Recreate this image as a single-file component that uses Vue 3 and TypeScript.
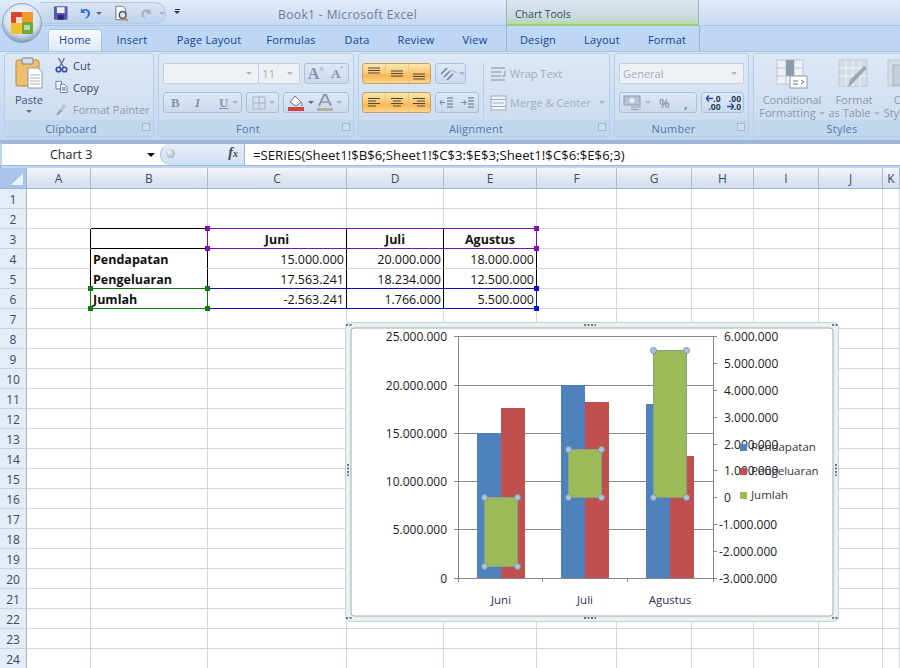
<script setup lang="ts">
const tabs = ['Home', 'Insert', 'Page Layout', 'Formulas', 'Data', 'Review', 'View', 'Design', 'Layout', 'Format']
const columns = ['A', 'B', 'C', 'D', 'E', 'F', 'G', 'H', 'I', 'J', 'K']
const rows = Array.from({ length: 24 }, (_, i) => i + 1)

const cells: Record<string, string> = {
  C3: 'Juni', D3: 'Juli', E3: 'Agustus',
  B4: 'Pendapatan', C4: '15.000.000', D4: '20.000.000', E4: '18.000.000',
  B5: 'Pengeluaran', C5: '17.563.241', D5: '18.234.000', E5: '12.500.000',
  B6: 'Jumlah', C6: '-2.563.241', D6: '1.766.000', E6: '5.500.000',
}

function cellClass(col: string, row: number) {
  const inTable = 'BCDE'.includes(col)
  return {
    bold: row === 3 || col === 'B',
    center: row === 3,
    right: row > 3 && col !== 'B',
    'edge-right': row >= 3 && row <= 6 && 'ABCDE'.includes(col),
    'edge-bottom': inTable && (row === 2 || row === 3 || row === 6),
    'no-bottom': inTable && (row === 4 || row === 5) && col === 'B',
  }
}

// selected ranges drawn over the sheet
const ranges = [
  { color: '#7f0fb0', x: 207, y: 228, w: 329, h: 20 },
  { color: '#0a10c0', x: 207, y: 288, w: 329, h: 20 },
  { color: '#107a10', x: 90, y: 288, w: 117, h: 20 },
]
function corners(r: { x: number; y: number; w: number; h: number }) {
  return [[r.x, r.y], [r.x + r.w, r.y], [r.x, r.y + r.h], [r.x + r.w, r.y + r.h]]
}

const leftAxis = [
  { label: '25.000.000', y: 336 },
  { label: '20.000.000', y: 385 },
  { label: '15.000.000', y: 433 },
  { label: '10.000.000', y: 481 },
  { label: '5.000.000', y: 529 },
  { label: '0', y: 578 },
]
const rightAxis = [
  { label: '6.000.000', y: 336 },
  { label: '5.000.000', y: 363 },
  { label: '4.000.000', y: 390 },
  { label: '3.000.000', y: 417 },
  { label: '2.000.000', y: 444 },
  { label: '1.000.000', y: 470 },
  { label: '0', y: 497 },
  { label: '-1.000.000', y: 524 },
  { label: '-2.000.000', y: 551 },
  { label: '-3.000.000', y: 578 },
]
const groups = [
  { name: 'Juni', x: 477, blueTop: 433, redTop: 408, greenTop: 497, greenBottom: 566 },
  { name: 'Juli', x: 561, blueTop: 385, redTop: 402, greenTop: 449, greenBottom: 497 },
  { name: 'Agustus', x: 646, blueTop: 404, redTop: 456, greenTop: 350, greenBottom: 497 },
]
const legend = [
  { name: 'Pendapatan', color: '#4f81bd', y: 447 },
  { name: 'Pengeluaran', color: '#c0504d', y: 471 },
  { name: 'Jumlah', color: '#9bbb59', y: 495 },
]
</script>

<template>
  <div class="window">
    <div class="title-bar">
      <div class="office-btn">
        <svg width="42" height="42" viewBox="0 0 42 42">
          <defs>
            <radialGradient id="orb" cx="50%" cy="35%" r="65%">
              <stop offset="0" stop-color="#fdfeff" />
              <stop offset="0.7" stop-color="#d3dfee" />
              <stop offset="1" stop-color="#7f96b4" />
            </radialGradient>
          </defs>
          <circle cx="21" cy="21" r="19.5" fill="url(#orb)" stroke="#8ba3c2" />
          <rect x="10" y="10" width="11" height="11" fill="#d8472b" rx="1" />
          <rect x="21" y="10" width="11" height="10" fill="#f09a2a" rx="1" />
          <rect x="10" y="21" width="11" height="11" fill="#f2c22e" rx="1" />
          <rect x="21" y="20" width="11" height="12" fill="#6cab3a" rx="1" />
          <rect x="15" y="15" width="6" height="6" fill="#fff" opacity=".8" />
          <rect x="23" y="23" width="6" height="5" fill="#fff" opacity=".55" />
        </svg>
      </div>
      <div class="qat">
        <svg width="16" height="16" viewBox="0 0 16 16">
          <rect x="1" y="1" width="14" height="14" rx="1" fill="#5b58a8" />
          <rect x="4" y="2" width="8" height="6" fill="#e8f0fa" />
          <rect x="5" y="10" width="6" height="5" fill="#2c2a70" />
        </svg>
        <svg class="undo" width="15" height="15" viewBox="0 0 15 15">
          <path d="M4 2 L4 7 L9 7 L7 5 C10 4 12 6 11 9 C10.500 11 9 12 7 13 C11 13 14 10 13.500 7 C13 3 9 2 5.500 3.500 Z" fill="#2f6fc8" />
        </svg>
        <span class="tiny-arrow dark"></span>
        <svg class="preview" width="16" height="17" viewBox="0 0 16 17">
          <path d="M2 1 H9 L12 4 V15 H2 Z" fill="#fdfdf8" stroke="#6b7686" />
          <circle cx="9" cy="10" r="3.500" fill="#cfe2f5" stroke="#3f4a5a" stroke-width="1.300" />
          <path d="M11 13 L14 16" stroke="#d18a2a" stroke-width="2" />
        </svg>
        <svg class="redo" width="15" height="15" viewBox="0 0 15 15">
          <path d="M11 3 V8 H6 L8 6 C5 5 3 7 4 10 C4.500 11.500 6 12.500 7 13 C3 13 1 10 1.500 7 C2 3 6 2 9.500 4 Z" fill="#a6b4c6" />
        </svg>
        <span class="tiny-arrow"></span>
      </div>
      <span class="qat-menu"><i></i><b></b></span>
      <span class="doc-title">Book1 - Microsoft Excel</span>
      <div class="chart-tools">Chart Tools</div>
    </div>

    <div class="tab-row">
      <span v-for="tab in tabs" :key="tab" class="tab" :class="{ active: tab === 'Home' }">{{ tab }}</span>
    </div>

    <div class="ribbon">
      <section class="group clipboard">
        <div class="group-body clip-body">
          <div class="paste">
            <svg width="28" height="32" viewBox="0 0 28 32">
              <rect x="1" y="3" width="23" height="26" rx="2" fill="#f0bf6c" stroke="#b58a48" />
              <rect x="7" y="1" width="11" height="6" rx="1" fill="#d8dde4" stroke="#7d7f80" />
              <path d="M13 11 H23 L27 15 V31 H13 Z" fill="#fff" stroke="#8d98a8" />
              <path d="M15 18 H25 M15 21 H25 M15 24 H25 M15 27 H25" stroke="#a9b5c6" />
            </svg>
            <span class="paste-label">Paste</span>
            <span class="tiny-arrow dark"></span>
          </div>
          <div class="clip-list">
            <div class="clip-item">
              <svg width="12" height="16" viewBox="0 0 12 16">
                <path d="M3 1 L8 10 M9 1 L4 10" stroke="#6b7686" stroke-width="1.500" />
                <circle cx="3" cy="12.500" r="2.300" fill="none" stroke="#2b4fa8" stroke-width="1.600" />
                <circle cx="9" cy="12.500" r="2.300" fill="none" stroke="#2b4fa8" stroke-width="1.600" />
              </svg>
              <span>Cut</span>
            </div>
            <div class="clip-item">
              <svg width="14" height="14" viewBox="0 0 14 14">
                <path d="M1 1 H7 V9 H1 Z" fill="#fff" stroke="#5c7cae" />
                <path d="M6 4 H10 L13 7 V13 H6 Z" fill="#fff" stroke="#5c7cae" />
                <path d="M7.500 8 H11.500 M7.500 10 H11.500" stroke="#2b4fa8" />
              </svg>
              <span>Copy</span>
            </div>
            <div class="clip-item off">
              <svg width="14" height="15" viewBox="0 0 14 15">
                <path d="M9 1 L13 4 L8 9 L6 7 Z" fill="#c2c8d0" />
                <path d="M6 7 L8 9 L3 14 L1 13 Z" fill="#9aa3ae" />
              </svg>
              <span>Format Painter</span>
            </div>
          </div>
        </div>
        <footer class="group-label">Clipboard<i class="launcher"></i></footer>
      </section>

      <section class="group font">
        <div class="group-body">
          <div class="line">
            <div class="combo font-name"><span class="tiny-arrow"></span></div>
            <div class="combo font-size"><span>11</span><span class="tiny-arrow"></span></div>
            <div class="btns grow-btns">
              <span class="serif big">A<sup>^</sup></span>
              <span class="serif small">A<sup>ˇ</sup></span>
            </div>
          </div>
          <div class="line">
            <div class="btns biu">
              <span class="serif strong">B</span>
              <span class="serif ital">I</span>
              <span class="serif under">U</span>
              <span class="tiny-arrow"></span>
            </div>
            <div class="btns border-btn">
              <svg width="14" height="14" viewBox="0 0 14 14">
                <path d="M1 1 H13 V13 H1 Z M7 1 V13 M1 7 H13" fill="none" stroke="#a8b4c4" />
              </svg>
              <span class="tiny-arrow"></span>
            </div>
            <div class="btns color-btns">
              <svg width="18" height="18" viewBox="0 0 18 18">
                <path d="M3 8 L8 2 L14 8 L9 12 Z" fill="#fff" stroke="#6b7686" />
                <path d="M14 8 Q16 11 15 12" stroke="#6b7686" fill="none" />
                <rect x="1" y="13" width="16" height="4" fill="#d4403a" />
              </svg>
              <span class="tiny-arrow dark"></span>
              <svg width="16" height="18" viewBox="0 0 16 18">
                <path d="M2 12 L7 1 H9 L14 12" fill="none" stroke="#8e99a8" stroke-width="2" />
                <path d="M4.500 8 H11.500" stroke="#8e99a8" stroke-width="1.500" />
                <rect x="0" y="14" width="16" height="3" fill="#b4b09a" />
              </svg>
              <span class="tiny-arrow"></span>
            </div>
          </div>
        </div>
        <footer class="group-label">Font<i class="launcher"></i></footer>
      </section>

      <section class="group alignment">
        <div class="group-body align-body">
          <div class="align-left">
            <div class="line">
              <div class="orange-set">
                <span><svg width="16" height="15" viewBox="0 0 16 15"><path d="M2 2 H14 M2 4.500 H14 M2 7 H14" stroke="#4a4a40" /></svg></span>
                <span><svg width="16" height="15" viewBox="0 0 16 15"><path d="M2 5 H14 M2 7.500 H14 M2 10 H14" stroke="#4a4a40" /></svg></span>
                <span><svg width="16" height="15" viewBox="0 0 16 15"><path d="M2 8 H14 M2 10.500 H14 M2 13 H14" stroke="#4a4a40" /></svg></span>
              </div>
              <div class="btns orient">
                <svg width="20" height="14" viewBox="0 0 20 14"><path d="M2 7 L8 1 M5 10 L11 4 M8 13 L14 7" stroke="#6b83a8" stroke-width="1.500" /><path d="M12 3 L18 6" stroke="#9db1cb" /></svg>
                <span class="tiny-arrow"></span>
              </div>
            </div>
            <div class="line">
              <div class="orange-set">
                <span><svg width="16" height="13" viewBox="0 0 16 13"><path d="M2 2.500 H14 M2 5 H10 M2 7.500 H14 M2 10 H10" stroke="#4a4a40" /></svg></span>
                <span><svg width="16" height="13" viewBox="0 0 16 13"><path d="M2 2.500 H14 M4 5 H12 M2 7.500 H14 M4 10 H12" stroke="#4a4a40" /></svg></span>
                <span><svg width="16" height="13" viewBox="0 0 16 13"><path d="M2 2.500 H14 M6 5 H14 M2 7.500 H14 M6 10 H14" stroke="#4a4a40" /></svg></span>
              </div>
              <div class="btns indent">
                <svg width="15" height="14" viewBox="0 0 15 14"><path d="M8 2 H14 M8 5 H14 M8 8 H14 M8 11 H14" stroke="#5d6c80" /><path d="M1 6.500 H6 M3 4 L1 6.500 L3 9" stroke="#5b8cc8" fill="none" /></svg>
                <svg width="15" height="14" viewBox="0 0 15 14"><path d="M8 2 H14 M8 5 H14 M8 8 H14 M8 11 H14" stroke="#5d6c80" /><path d="M1 6.500 H6 M4 4 L6 6.500 L4 9" stroke="#5b8cc8" fill="none" /></svg>
              </div>
            </div>
          </div>
          <div class="align-right">
            <div class="line wide-item">
              <svg width="18" height="16" viewBox="0 0 18 16"><path d="M1 2 H15 M1 6 H11 M1 10 H11 M1 14 H15" stroke="#a0acbb" stroke-width="1.500" /><path d="M15 5 V10 H12" stroke="#8a97a8" fill="none" /></svg>
              <span>Wrap Text</span>
            </div>
            <div class="line wide-item">
              <svg width="18" height="16" viewBox="0 0 18 16"><rect x="1" y="1" width="15" height="14" fill="#eef3f9" stroke="#a0acbb" /><path d="M3 8 H14 M1 4.500 H16 M1 11.500 H16" stroke="#a0acbb" /></svg>
              <span>Merge &amp; Center</span>
              <span class="tiny-arrow merge-arrow"></span>
            </div>
          </div>
        </div>
        <footer class="group-label">Alignment<i class="launcher"></i></footer>
      </section>

      <section class="group number">
        <div class="group-body">
          <div class="line">
            <div class="combo general"><span>General</span><span class="tiny-arrow"></span></div>
          </div>
          <div class="line">
            <div class="btns currency">
              <svg width="20" height="16" viewBox="0 0 20 16"><rect x="1" y="1" width="16" height="9" fill="#b8c4d4" stroke="#8e9cb0" /><circle cx="9" cy="5.500" r="2.500" fill="#e8eef6" /><path d="M8 12 H18 M8 14.500 H16" stroke="#8e9cb0" /></svg>
              <span class="tiny-arrow"></span>
              <span class="pct">%</span>
              <span class="comma">,</span>
            </div>
            <div class="btns decimals">
              <span class="dec">
                <span class="dec-line"><svg width="7" height="7" viewBox="0 0 7 7"><path d="M0 3.500 H7 M3 0.500 L0 3.500 L3 6.500" stroke="#2b4fa8" stroke-width="1.500" fill="none" /></svg>.0</span>
                <span class="dec-line">.00</span>
              </span>
              <span class="dec">
                <span class="dec-line">.00</span>
                <span class="dec-line"><svg width="7" height="7" viewBox="0 0 7 7"><path d="M0 3.500 H7 M4 0.500 L7 3.500 L4 6.500" stroke="#2b4fa8" stroke-width="1.500" fill="none" /></svg>.0</span>
              </span>
            </div>
          </div>
        </div>
        <footer class="group-label">Number<i class="launcher"></i></footer>
      </section>

      <section class="group styles">
        <div class="group-body styles-body">
          <div class="style-item cond">
            <svg width="32" height="30" viewBox="0 0 32 30">
              <rect x="1" y="1" width="26" height="24" fill="#eef2f7" stroke="#bcc6d2" />
              <path d="M10 1 V25 M18 1 V25 M1 9 H27 M1 17 H27" stroke="#bcc6d2" />
              <rect x="10" y="1" width="8" height="16" fill="#8e9bab" />
              <rect x="14" y="17" width="17" height="12" fill="#fff" stroke="#8e9bab" />
              <path d="M17 22 H22 M17 25 H22 M25 21 L28 23 L25 25" stroke="#6c7a8c" fill="none" />
            </svg>
            <span>Conditional</span>
            <span>Formatting<i class="tiny-arrow"></i></span>
          </div>
          <div class="style-item as-table">
            <svg width="32" height="30" viewBox="0 0 32 30">
              <rect x="1" y="1" width="28" height="26" fill="#d4dce6" stroke="#bcc6d2" />
              <path d="M8 1 V27 M15 1 V27 M22 1 V27 M1 9 H29 M1 17 H29" stroke="#eef2f7" />
              <path d="M29 9 L15 24 L10 28 L12 21 L26 7 Z" fill="#9ba8b8" />
            </svg>
            <span>Format</span>
            <span>as Table<i class="tiny-arrow"></i></span>
          </div>
          <div class="style-item cell-styles">
            <svg width="32" height="30" viewBox="0 0 32 30">
              <rect x="1" y="1" width="28" height="26" fill="#d4dce6" stroke="#bcc6d2" />
              <rect x="6" y="6" width="24" height="20" fill="#c5cfdb" stroke="#a5b0be" />
            </svg>
            <span>Cell</span>
            <span>Styles<i class="tiny-arrow"></i></span>
          </div>
        </div>
        <footer class="group-label plain">Styles</footer>
      </section>
    </div>

    <div class="formula-bar">
      <div class="name-box"><span>Chart 3</span><i class="name-arrow"></i></div>
      <div class="fx-pill">
        <i class="fx-knob"></i>
        <em>f<small>x</small></em>
      </div>
      <div class="formula">=SERIES(Sheet1!$B$6;Sheet1!$C$3:$E$3;Sheet1!$C$6:$E$6;3)</div>
    </div>

    <div class="sheet">
      <div class="corner"><i></i></div>
      <div v-for="col in columns" :key="col" class="col-head">{{ col }}</div>
      <template v-for="row in rows" :key="row">
        <div class="row-head">{{ row }}</div>
        <div v-for="col in columns" :key="col + row" class="cell" :class="cellClass(col, row)">{{ cells[col + row] }}</div>
      </template>

      <!-- selection marks and the chart float over the cells, coordinates are page pixels -->
      <svg class="overlay" width="900" height="479" viewBox="0 189 900 479">
        <g v-for="r in ranges" :key="r.color">
          <rect :x="r.x + 0.500" :y="r.y + 0.500" :width="r.w" :height="r.h" fill="none" :stroke="r.color" />
          <rect v-for="c in corners(r)" :key="c.join()" :x="c[0] - 2" :y="c[1] - 2" width="5" height="5" :fill="r.color" />
        </g>

        <rect x="345.500" y="322.500" width="493" height="299" rx="5" fill="#e6f2f3" stroke="#bcd5da" />
        <rect x="351" y="328" width="482" height="288" rx="3" fill="#fff" stroke="#a0aab2" />

        <path d="M584 325 H596 M584 618 H596 M346 325 H352 M346 618 H352 M832 325 H838 M832 618 H838" stroke="#6a7480" stroke-width="2" stroke-dasharray="2 1.500" />
        <path d="M348 464 V476 M836 464 V476" stroke="#6a7480" stroke-width="2" stroke-dasharray="2 1.500" />

        <line v-for="t in leftAxis" :key="t.y" x1="454" x2="713" :y1="t.y + 0.500" :y2="t.y + 0.500" stroke="#868686" />
        <line x1="458.500" x2="458.500" y1="336" y2="582" stroke="#868686" />
        <line x1="713.500" x2="713.500" y1="336" y2="582" stroke="#868686" />
        <line x1="542.500" x2="542.500" y1="578" y2="582" stroke="#868686" />
        <line x1="627.500" x2="627.500" y1="578" y2="582" stroke="#868686" />
        <line v-for="t in rightAxis" :key="'r' + t.y" x1="713" x2="717" :y1="t.y + 0.500" :y2="t.y + 0.500" stroke="#868686" />

        <g v-for="g in groups" :key="g.name">
          <rect :x="g.x" :y="g.blueTop" width="24" :height="578 - g.blueTop" fill="#4f81bd" />
          <rect :x="g.x + 24" :y="g.redTop" width="24" :height="578 - g.redTop" fill="#c0504d" />
          <rect :x="g.x + 7.500" :y="g.greenTop + 0.500" width="33" :height="g.greenBottom - g.greenTop" rx="1.500" fill="#9bbb59" stroke="#8d9e86" />
          <circle v-for="h in [[7.500, g.greenTop], [40.500, g.greenTop], [7.500, g.greenBottom], [40.500, g.greenBottom]]" :key="h.join()" :cx="g.x + h[0]" :cy="h[1] + 0.500" r="3" fill="#a9c6de" stroke="#7f93a6" />
          <text :x="g.x + 24" y="604" text-anchor="middle" class="cat">{{ g.name }}</text>
        </g>

        <text v-for="t in leftAxis" :key="'ll' + t.y" x="447" :y="t.y + 5" text-anchor="end" class="axis">{{ t.label }}</text>
        <text v-for="t in rightAxis" :key="'rl' + t.y" :x="t.label.startsWith('-') ? 719 : 724" :y="t.y + 5" class="axis">{{ t.label }}</text>

        <g v-for="l in legend" :key="l.name">
          <rect x="740" :y="l.y - 3" width="7" height="7" :fill="l.color" />
          <text x="751" :y="l.y + 4" class="axis leg">{{ l.name }}</text>
        </g>
      </svg>
    </div>
  </div>
</template>

<style scoped>
.window {
  width: 900px;
  height: 668px;
  overflow: hidden;
  background: #bfd7f3;
  font-family: "Open Sans", "DejaVu Sans", sans-serif;
  font-size: 11px;
  color: #15428b;
  box-shadow: inset 1px 0 0 #7fa3cf;
}

/* title */
.title-bar {
  height: 26px;
  position: relative;
  display: flex;
  align-items: flex-start;
  background: linear-gradient(#e3edf9, #d2e1f4 55%, #c8daf1);
  border-bottom: 1px solid #a9c3e2;
  box-sizing: border-box;
}
.office-btn {
  position: absolute;
  left: 1px;
  top: 2px;
  z-index: 2;
}
.qat {
  margin: 2px 0 0 40px;
  width: 126px;
  height: 22px;
  box-sizing: border-box;
  padding-left: 13px;
  border: 1px solid #b4cae4;
  border-left: none;
  border-radius: 0 12px 12px 0;
  background: linear-gradient(#d8e5f5, #bfd3ec);
  display: flex;
  align-items: center;
}
.undo { margin-left: 9px; }
.preview { margin-left: 12px; }
.redo { margin-left: 11px; }
.qat .tiny-arrow { margin-left: 4px; }
.qat-menu {
  margin: 9px 0 0 8px;
  display: flex;
  flex-direction: column;
  gap: 1px;
  align-items: center;
}
.qat-menu i {
  width: 5px;
  height: 1px;
  background: #26374f;
}
.qat-menu b {
  border: 3px solid transparent;
  border-top-color: #26374f;
  border-bottom: none;
}
.doc-title {
  margin: 6px 0 0 98px;
  width: 155px;
  font-size: 12px;
  letter-spacing: 0.4px;
  color: #6d7f97;
  white-space: nowrap;
}
.chart-tools {
  position: absolute;
  left: 506px;
  top: 0;
  width: 193px;
  height: 26px;
  box-sizing: border-box;
  padding: 7px 0 0 8px;
  border-left: 1px solid #9cb3cc;
  border-right: 1px solid #9cb3cc;
  border-bottom: 2px solid #97ce68;
  background: linear-gradient(#dbe7f3, #c9dcdc 70%, #b9d8ae);
  color: #33496a;
  font-size: 10.500px;
}

/* tabs */
.tab-row {
  height: 25px;
  padding-left: 48px;
  display: grid;
  grid-template-columns: 54px 60px 94px 70px 62px 56px 62px 64px 64px 66px;
  background: linear-gradient(#bfd8f7, #bcd5f3);
  position: relative;
}
.tab-row::after {
  content: "";
  position: absolute;
  left: 506px;
  top: 0;
  width: 192px;
  height: 25px;
  border-left: 1px solid #9cb3cc;
  border-right: 1px solid #9cb3cc;
}
.tab {
  display: flex;
  align-items: center;
  justify-content: center;
  padding-top: 1px;
  color: #15428b;
  letter-spacing: 0.2px;
}
.tab.active {
  margin-top: 3px;
  padding-top: 0;
  padding-bottom: 3px;
  background: linear-gradient(#f8fbff, #dde9f7);
  border: 1px solid #a9c3e2;
  border-bottom: none;
  border-radius: 3px 3px 0 0;
}

/* ribbon */
.ribbon {
  height: 92px;
  box-sizing: border-box;
  padding: 1px 0 0 4px;
  display: flex;
  gap: 4px;
  background: linear-gradient(#d8e6f6, #c0d6f0);
  border-top: 1px solid #a9c3e2;
  border-bottom: 3px solid #9db7d7;
  overflow: hidden;
}
.group {
  flex: none;
  height: 84px;
  box-sizing: border-box;
  border: 1px solid #b8cee6;
  border-radius: 3px;
  display: flex;
  flex-direction: column;
  background: linear-gradient(#dde8f6, #cfdff1 70%, #c6d9ef);
  overflow: hidden;
}
.clipboard { width: 150px; }
.font { width: 196px; }
.alignment { width: 252px; }
.number { width: 135px; }
.styles { width: 178px; }
.group-body {
  flex: 1;
  padding: 9px 4px 0;
  display: flex;
  flex-direction: column;
  gap: 8px;
}
.group-label {
  height: 16px;
  position: relative;
  box-sizing: border-box;
  padding: 1px 16px 0 0;
  background: #c1d7ee;
  text-align: center;
  line-height: 15px;
  font-size: 11px;
  color: #5077aa;
  letter-spacing: 0.2px;
}
.group-label.plain { padding-right: 0; }
.launcher {
  position: absolute;
  right: 3px;
  top: 3px;
  width: 6px;
  height: 6px;
  border: 1px solid #a3b7cf;
  background: #d3e0ef;
}
.line {
  height: 21px;
  display: flex;
  align-items: center;
  gap: 4px;
}
.tiny-arrow {
  display: inline-block;
  width: 0;
  height: 0;
  border: 3px solid transparent;
  border-top: 3px solid #a9b5c4;
  border-bottom: none;
  flex: none;
}
.tiny-arrow.dark { border-top-color: #5c6b80; }

/* clipboard */
.clip-body {
  flex-direction: row;
  padding: 3px 0 0 8px;
  gap: 10px;
}
.paste {
  width: 32px;
  display: flex;
  flex-direction: column;
  align-items: center;
  gap: 3px;
}
.paste-label {
  color: #3c557c;
  margin-top: 1px;
  line-height: 14px;
}
.clip-list {
  display: flex;
  flex-direction: column;
  gap: 6px;
}
.clip-item {
  height: 16px;
  display: flex;
  align-items: center;
  gap: 5px;
  color: #33496a;
}
.clip-item svg { width: 13px; }
.clip-item.off { color: #8f99a6; }

/* font */
.combo {
  height: 21px;
  box-sizing: border-box;
  display: flex;
  align-items: center;
  justify-content: space-between;
  padding: 0 6px 0 3px;
  background: #edf1f6;
  border: 1px solid #c3d1e0;
  color: #a4acb7;
}
.font-name {
  width: 97px;
  justify-content: flex-end;
  margin-right: -4px;
  border-right: none;
}
.font-size { width: 42px; }
.general { width: 126px; }
.btns {
  height: 21px;
  box-sizing: border-box;
  display: flex;
  align-items: center;
  border: 1px solid #a8c0da;
  border-radius: 3px;
  background: linear-gradient(#dde8f5, #c9daee);
  color: #8694a6;
}
.serif { font-family: "Liberation Serif", serif; }
.grow-btns {
  width: 46px;
  padding-left: 3px;
  gap: 7px;
}
.big { font-size: 16px; font-weight: bold; }
.small { font-size: 13px; font-weight: bold; }
.grow-btns sup {
  font-size: 8px;
  line-height: 0;
}
.biu {
  width: 79px;
  padding-left: 7px;
  font-size: 13px;
  gap: 0;
}
.biu .strong { font-weight: bold; width: 24px; }
.biu .ital { font-style: italic; width: 24px; font-weight: bold; }
.biu .under { text-decoration: underline; width: 13px; font-weight: bold; }
.border-btn {
  width: 34px;
  padding-left: 5px;
  gap: 3px;
}
.color-btns {
  width: 66px;
  padding-left: 3px;
  gap: 3px;
}

/* alignment */
.align-body {
  flex-direction: row;
  gap: 6px;
  padding-left: 3px;
}
.align-left {
  flex: none;
  width: 122px;
  box-sizing: border-box;
  display: flex;
  flex-direction: column;
  gap: 8px;
  border-right: 1px solid #bccde2;
}
.align-right {
  display: flex;
  flex-direction: column;
  gap: 8px;
}
.orange-set {
  width: 69px;
  height: 21px;
  box-sizing: border-box;
  display: grid;
  grid-template-columns: repeat(3, 1fr);
  border: 1px solid #c7a066;
  border-radius: 3px;
  background: linear-gradient(#fde8ae, #fcc56e 50%, #fbb552 60%, #fdd68a);
}
.orange-set span {
  display: flex;
  align-items: center;
  justify-content: center;
  border-left: 1px solid #e4c48e;
}
.orange-set span:first-child { border-left: none; }
.orient {
  width: 31px;
  padding-left: 3px;
}
.indent {
  width: 44px;
  justify-content: space-around;
}
.wide-item {
  color: #a3adba;
  font-size: 11px;
  gap: 2px;
  white-space: nowrap;
}
.merge-arrow { margin-left: 6px; }

/* number */
.currency {
  width: 78px;
  padding-left: 3px;
  gap: 2px;
}
.pct {
  margin-left: 6px;
  width: 23px;
  font-size: 13px;
  color: #6f7f93;
}
.comma {
  font-size: 13px;
  font-weight: bold;
  color: #6f7f93;
}
.decimals { width: 43px; }
.dec {
  width: 50%;
  display: flex;
  flex-direction: column;
  align-items: flex-end;
  padding-right: 2px;
  box-sizing: border-box;
  font-size: 8.500px;
  line-height: 8px;
  font-weight: 700;
  color: #2a3b55;
}
.dec-line {
  display: flex;
  align-items: center;
}

/* styles */
.styles-body {
  flex-direction: row;
  gap: 0;
  padding: 5px 0 0 0;
}
.style-item {
  display: flex;
  flex-direction: column;
  align-items: center;
  color: #8c98a8;
  line-height: 13px;
  flex: none;
  white-space: nowrap;
}
.style-item svg { margin-bottom: 4px; }
.style-item i { margin: 0 0 2px 3px; vertical-align: middle; }
.cond { width: 76px; }
.as-table { width: 48px; }
.cell-styles { width: 50px; }

/* formula bar */
.formula-bar {
  height: 23px;
  box-sizing: border-box;
  display: flex;
  background: #fff;
  border-top: 1px solid #9db7d7;
  border-bottom: 1px solid #9db7d7;
  border-left: 2px solid #bfd7f3;
}
.name-box {
  width: 158px;
  display: flex;
  align-items: center;
  padding-left: 48px;
  box-sizing: border-box;
  font-size: 12.500px;
  color: #1c2330;
  position: relative;
}
.name-arrow {
  position: absolute;
  left: 145px;
  top: 9px;
  border: 4px solid transparent;
  border-top: 4px solid #111;
  border-bottom: none;
}
.fx-pill {
  width: 85px;
  box-sizing: border-box;
  border-left: 1px solid #9db7d7;
  border-radius: 11px 0 0 11px;
  background: linear-gradient(#e6eef8, #cfdff2);
  border-right: 1px solid #9db7d7;
  position: relative;
  text-align: right;
  padding: 1px 6px 0 0;
}
.fx-knob {
  position: absolute;
  left: 5px;
  top: 5px;
  width: 9px;
  height: 9px;
  border-radius: 50%;
  background: radial-gradient(circle at 35% 35%, #f2f5f8, #8f9cab);
}
.fx-pill em {
  font-family: "Liberation Serif", serif;
  font-weight: bold;
  font-size: 14px;
  color: #3b4655;
}
.fx-pill small { font-size: 10px; }
.formula {
  flex: 1;
  padding-left: 8px;
  display: flex;
  align-items: center;
  font-size: 13.200px;
  color: #111;
  white-space: nowrap;
}

/* sheet */
.sheet {
  margin-top: 2px;
  position: relative;
  display: grid;
  grid-template-columns: 27px 64px 117px 139px 97px 93px 80px 75px 62px 65px 64px 17px;
  grid-template-rows: 21px repeat(24, 20px);
  background: #fff;
}
.corner {
  background: #a9c4e9;
  border-right: 1px solid #9eb6ce;
  border-bottom: 1px solid #9eb6ce;
  position: relative;
}
.corner i {
  position: absolute;
  right: 3px;
  bottom: 3px;
  border: 6px solid transparent;
  border-right-color: #e8f0fa;
  border-bottom-color: #e8f0fa;
}
.col-head {
  display: flex;
  align-items: center;
  justify-content: center;
  background: linear-gradient(#f3f6fa, #dfe7f2 50%, #d4dfee);
  border-right: 1px solid #a8bcd4;
  border-bottom: 1px solid #9eb6ce;
  color: #3a4a60;
  font-size: 12px;
}
.row-head {
  display: flex;
  align-items: center;
  justify-content: center;
  padding-top: 2px;
  background: #e4ecf7;
  border-right: 1px solid #9eb6ce;
  border-bottom: 1px solid #c6d3e4;
  box-sizing: border-box;
  color: #3a4a60;
  font-size: 12px;
}
.cell {
  box-sizing: border-box;
  min-width: 0;
  border-right: 1px solid #d0d7e5;
  border-bottom: 1px solid #d0d7e5;
  padding: 2px 2px 0 2px;
  display: flex;
  align-items: center;
  color: #111;
  font-size: 12.500px;
  white-space: nowrap;
}
.cell.bold { font-weight: 700; }
.cell.center { justify-content: center; }
.cell.right { justify-content: flex-end; }
.cell.edge-right { border-right-color: #000; }
.cell.edge-bottom { border-bottom-color: #000; }
.cell.no-bottom { border-bottom-color: transparent; }
.overlay {
  position: absolute;
  left: 0;
  top: 21px;
  pointer-events: none;
}
.axis {
  font-size: 12px;
  fill: #1a1a1a;
}
.leg {
  font-size: 11.500px;
  fill: #333;
}
.cat {
  font-size: 11.500px;
  fill: #3a2a55;
}
</style>
